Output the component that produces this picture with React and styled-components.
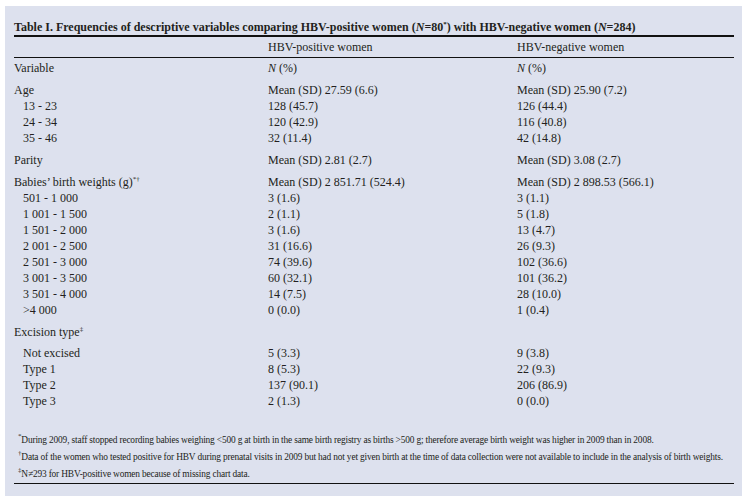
import React from 'react';
import styled, { createGlobalStyle } from 'styled-components';

const GlobalStyle = createGlobalStyle`
  body {
    margin: 0;
    background: #ffffff;
    font-family: 'Liberation Serif', 'Times New Roman', serif;
    color: #231f20;
  }
`;

const Page = styled.div`
  padding: 6px 5px 5px;
`;

const Panel = styled.div`
  width: 737px;
  height: 490px;
  box-sizing: border-box;
  background: #dde1ee;
  padding: 13px 8px 0 9px;
`;

const Title = styled.div`
  font-size: 12px;
  font-weight: bold;
  line-height: 16px;
  border-bottom: 2px solid #111;
  white-space: nowrap;
`;

const Row = styled.div`
  display: grid;
  grid-template-columns: 254px 249px 1fr;
  font-size: 12px;
  line-height: 16px;
  white-space: nowrap;
`;

const HeadRow = styled(Row)`
  padding: 2px 0 2px;
  border-bottom: 1px solid #111;
`;

const Body = styled.div`
  padding-top: 2px;
`;

const Group = styled.div`
  margin-bottom: 6px;
`;

const Label = styled.span`
  padding-left: ${(p) => (p.$sub ? '9px' : '0')};
  padding-bottom: ${(p) => (p.$gap ? '5px' : '0')};
`;

const Sup = styled.sup`
  font-size: 7px;
  line-height: 0;
  vertical-align: 5px;
`;

const Notes = styled.div`
  margin-top: 23px;
  padding-left: 4px;
  border-bottom: 1.5px solid #111;
  font-size: 9.4px;
  line-height: 17px;
  letter-spacing: -0.17px;
  white-space: nowrap;
`;

const Note = styled.div``;

const groups = [
  [['Variable', 'N (%)', 'N (%)', false]],
  [
    ['Age', 'Mean (SD) 27.59 (6.6)', 'Mean (SD) 25.90 (7.2)', false],
    ['13 - 23', '128 (45.7)', '126 (44.4)', true],
    ['24 - 34', '120 (42.9)', '116 (40.8)', true],
    ['35 - 46', '32 (11.4)', '42 (14.8)', true],
  ],
  [['Parity', 'Mean (SD) 2.81 (2.7)', 'Mean (SD) 3.08 (2.7)', false]],
  [
    ['Babies\u2019 birth weights (g)', 'Mean (SD) 2 851.71 (524.4)', 'Mean (SD) 2 898.53 (566.1)', false, '*\u2020'],
    ['501 - 1 000', '3 (1.6)', '3 (1.1)', true],
    ['1 001 - 1 500', '2 (1.1)', '5 (1.8)', true],
    ['1 501 - 2 000', '3 (1.6)', '13 (4.7)', true],
    ['2 001 - 2 500', '31 (16.6)', '26 (9.3)', true],
    ['2 501 - 3 000', '74 (39.6)', '102 (36.6)', true],
    ['3 001 - 3 500', '60 (32.1)', '101 (36.2)', true],
    ['3 501 - 4 000', '14 (7.5)', '28 (10.0)', true],
    ['>4 000', '0 (0.0)', '1 (0.4)', true],
  ],
  [
    ['Excision type', '', '', false, '\u2021', true],
    ['Not excised', '5 (3.3)', '9 (3.8)', true],
    ['Type 1', '8 (5.3)', '22 (9.3)', true],
    ['Type 2', '137 (90.1)', '206 (86.9)', true],
    ['Type 3', '2 (1.3)', '0 (0.0)', true],
  ],
];

const Cell = ({ text }) =>
  text.startsWith('N (') ? (
    <span>
      <i>N</i>
      {text.slice(1)}
    </span>
  ) : (
    <span>{text}</span>
  );

export default function App() {
  return (
    <Page>
      <GlobalStyle />
      <Panel>
        <Title>
          Table I. Frequencies of descriptive variables comparing HBV-positive women (<i>N</i>=80<Sup>*</Sup>) with
          HBV-negative women (<i>N</i>=284)
        </Title>
        <HeadRow>
          <span />
          <span>HBV-positive women</span>
          <span>HBV-negative women</span>
        </HeadRow>
        <Body>
          {groups.map((rows, gi) => (
            <Group key={gi}>
              {rows.map(([label, pos, neg, sub, sup, gap]) => (
                <Row key={label}>
                  <Label $sub={sub} $gap={gap}>
                    {label}
                    {sup && <Sup>{sup}</Sup>}
                  </Label>
                  <Cell text={pos} />
                  <Cell text={neg} />
                </Row>
              ))}
            </Group>
          ))}
        </Body>
        <Notes>
          <Note>
            <Sup>*</Sup>During 2009, staff stopped recording babies weighing &lt;500 g at birth in the same birth registry as
            births &gt;500 g; therefore average birth weight was higher in 2009 than in 2008.
          </Note>
          <Note>
            <Sup>{'\u2020'}</Sup>Data of the women who tested positive for HBV during prenatal visits in 2009 but had not yet
            given birth at the time of data collection were not available to include in the analysis of birth weights.
          </Note>
          <Note>
            <Sup>{'\u2021'}</Sup>N≠293 for HBV-positive women because of missing chart data.
          </Note>
        </Notes>
      </Panel>
    </Page>
  );
}
